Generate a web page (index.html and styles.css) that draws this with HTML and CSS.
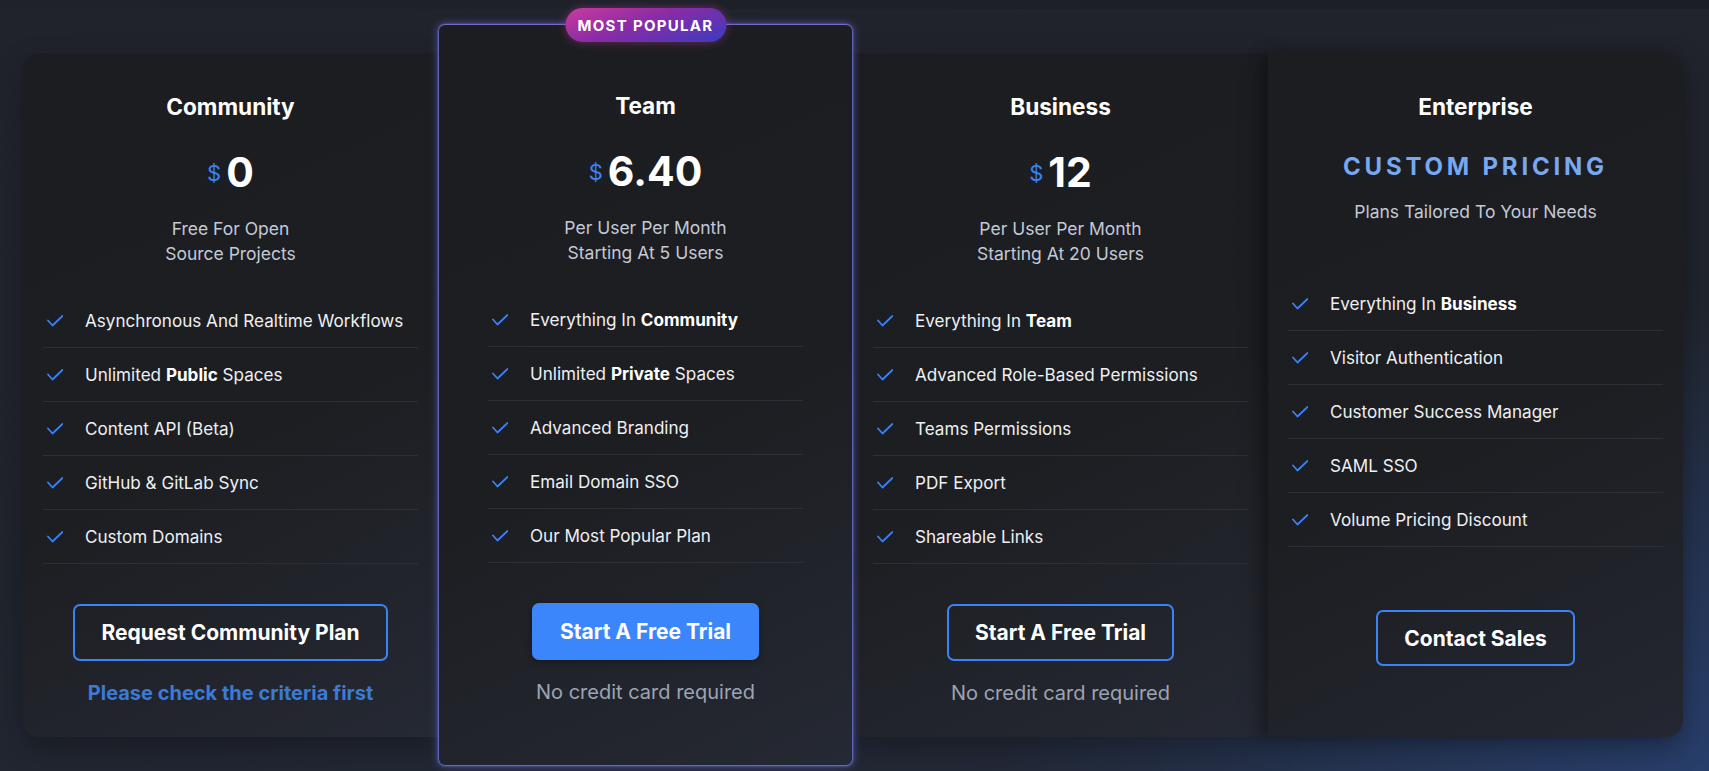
FILE: index.html
```html
<!DOCTYPE html>
<html lang="en">
<head>
<meta charset="utf-8">
<title>Pricing</title>
<link rel="stylesheet" href="styles.css">
</head>
<body>
<div class="top-strip"></div>
<main class="plans">
  <section class="card card-community">
    <h3 class="plan-name">Community</h3>
    <div class="price"><span class="currency">$</span><span class="amount">0</span></div>
    <p class="plan-desc">Free For Open<br>Source Projects</p>
    <ul class="features">
      <li><svg class="check" viewBox="0 0 16 12"><path d="M1 5.5 L5.5 10.5 L15.5 1"/></svg><span>Asynchronous And Realtime Workflows</span></li>
      <li><svg class="check" viewBox="0 0 16 12"><path d="M1 5.5 L5.5 10.5 L15.5 1"/></svg><span>Unlimited <b>Public</b> Spaces</span></li>
      <li><svg class="check" viewBox="0 0 16 12"><path d="M1 5.5 L5.5 10.5 L15.5 1"/></svg><span>Content API (Beta)</span></li>
      <li><svg class="check" viewBox="0 0 16 12"><path d="M1 5.5 L5.5 10.5 L15.5 1"/></svg><span>GitHub &amp; GitLab Sync</span></li>
      <li><svg class="check" viewBox="0 0 16 12"><path d="M1 5.5 L5.5 10.5 L15.5 1"/></svg><span>Custom Domains</span></li>
    </ul>
    <div class="card-foot">
      <a class="btn btn-outline btn-wide" href="#">Request Community Plan</a>
      <p class="foot-note foot-link">Please check the criteria first</p>
    </div>
  </section>

  <section class="card card-team">
    <span class="badge">MOST POPULAR</span>
    <h3 class="plan-name">Team</h3>
    <div class="price"><span class="currency">$</span><span class="amount">6.40</span></div>
    <p class="plan-desc">Per User Per Month<br>Starting At 5 Users</p>
    <ul class="features">
      <li><svg class="check" viewBox="0 0 16 12"><path d="M1 5.5 L5.5 10.5 L15.5 1"/></svg><span>Everything In <b>Community</b></span></li>
      <li><svg class="check" viewBox="0 0 16 12"><path d="M1 5.5 L5.5 10.5 L15.5 1"/></svg><span>Unlimited <b>Private</b> Spaces</span></li>
      <li><svg class="check" viewBox="0 0 16 12"><path d="M1 5.5 L5.5 10.5 L15.5 1"/></svg><span>Advanced Branding</span></li>
      <li><svg class="check" viewBox="0 0 16 12"><path d="M1 5.5 L5.5 10.5 L15.5 1"/></svg><span>Email Domain SSO</span></li>
      <li><svg class="check" viewBox="0 0 16 12"><path d="M1 5.5 L5.5 10.5 L15.5 1"/></svg><span>Our Most Popular Plan</span></li>
    </ul>
    <div class="card-foot">
      <a class="btn btn-primary" href="#">Start A Free Trial</a>
      <p class="foot-note">No credit card required</p>
    </div>
  </section>

  <section class="card card-business">
    <h3 class="plan-name">Business</h3>
    <div class="price"><span class="currency">$</span><span class="amount">12</span></div>
    <p class="plan-desc">Per User Per Month<br>Starting At 20 Users</p>
    <ul class="features">
      <li><svg class="check" viewBox="0 0 16 12"><path d="M1 5.5 L5.5 10.5 L15.5 1"/></svg><span>Everything In <b>Team</b></span></li>
      <li><svg class="check" viewBox="0 0 16 12"><path d="M1 5.5 L5.5 10.5 L15.5 1"/></svg><span>Advanced Role-Based Permissions</span></li>
      <li><svg class="check" viewBox="0 0 16 12"><path d="M1 5.5 L5.5 10.5 L15.5 1"/></svg><span>Teams Permissions</span></li>
      <li><svg class="check" viewBox="0 0 16 12"><path d="M1 5.5 L5.5 10.5 L15.5 1"/></svg><span>PDF Export</span></li>
      <li><svg class="check" viewBox="0 0 16 12"><path d="M1 5.5 L5.5 10.5 L15.5 1"/></svg><span>Shareable Links</span></li>
    </ul>
    <div class="card-foot">
      <a class="btn btn-outline" href="#">Start A Free Trial</a>
      <p class="foot-note">No credit card required</p>
    </div>
  </section>

  <section class="card card-enterprise">
    <h3 class="plan-name">Enterprise</h3>
    <div class="custom-price">CUSTOM PRICING</div>
    <p class="plan-desc plan-desc-single">Plans Tailored To Your Needs</p>
    <ul class="features">
      <li><svg class="check" viewBox="0 0 16 12"><path d="M1 5.5 L5.5 10.5 L15.5 1"/></svg><span>Everything In <b>Business</b></span></li>
      <li><svg class="check" viewBox="0 0 16 12"><path d="M1 5.5 L5.5 10.5 L15.5 1"/></svg><span>Visitor Authentication</span></li>
      <li><svg class="check" viewBox="0 0 16 12"><path d="M1 5.5 L5.5 10.5 L15.5 1"/></svg><span>Customer Success Manager</span></li>
      <li><svg class="check" viewBox="0 0 16 12"><path d="M1 5.5 L5.5 10.5 L15.5 1"/></svg><span>SAML SSO</span></li>
      <li><svg class="check" viewBox="0 0 16 12"><path d="M1 5.5 L5.5 10.5 L15.5 1"/></svg><span>Volume Pricing Discount</span></li>
    </ul>
    <div class="card-foot">
      <a class="btn btn-outline" href="#">Contact Sales</a>
    </div>
  </section>
</main>
</body>
</html>
```

FILE: styles.css
```css
html, body {
  margin: 0;
  padding: 0;
}

body {
  width: 1709px;
  height: 771px;
  overflow: hidden;
  font-family: Inter, "Noto Sans", "Liberation Sans", sans-serif;
  color: #e8eaee;
  background:
    radial-gradient(ellipse 1000px 650px at 100% 100%, rgba(40, 64, 110, 0.95), rgba(40, 64, 110, 0) 72%),
    linear-gradient(170deg, #20232b 0%, #20242c 55%, #232a3a 100%);
  position: relative;
}

.top-strip {
  height: 9px;
  background: linear-gradient(90deg, rgba(28, 31, 38, 0.3), rgba(26, 29, 36, 0.8));
}

.plans {
  display: grid;
  grid-template-columns: repeat(4, 415px);
  align-items: center;
  margin-left: 23px;
  padding-top: 15px;
}

.card {
  position: relative;
  box-sizing: border-box;
  height: 684px;
  display: flex;
  flex-direction: column;
  padding-top: 39px;
  background: linear-gradient(155deg, #1c1d21 0%, #1d1e22 55%, #252933 100%);
  box-shadow: 0 12px 30px rgba(0, 0, 0, 0.28);
}

.card-community {
  border-radius: 16px 0 0 16px;
}

.card-team {
  z-index: 3;
  height: 742px;
  padding-top: 66px;
  border: 1px solid #5d62b4;
  border-top-color: #7669c8;
  border-bottom-color: #5073b8;
  border-radius: 7px;
  box-shadow: 0 0 9px rgba(105, 110, 235, 0.6), 0 0 2px rgba(140, 130, 240, 0.7);
}

.card-business {
  z-index: 1;
}

.card-enterprise {
  z-index: 2;
  border-radius: 0 16px 16px 0;
  background: linear-gradient(155deg, #1c1d21 0%, #1d1e22 55%, #242731 100%);
  box-shadow: -6px 0 14px rgba(0, 0, 0, 0.25), 0 12px 30px rgba(0, 0, 0, 0.28);
}

.badge {
  position: absolute;
  top: -17px;
  left: 50%;
  transform: translateX(-50%);
  box-sizing: border-box;
  width: 161px;
  height: 34px;
  border-radius: 17px;
  display: flex;
  align-items: center;
  justify-content: center;
  font-size: 15px;
  font-weight: 700;
  letter-spacing: 1.3px;
  color: #ffffff;
  background: linear-gradient(160deg, #c93b9d 0%, #8a2ba5 45%, #3c3bbf 100%);
  box-shadow: 0 0 10px rgba(200, 60, 170, 0.45);
}

.plan-name {
  margin: 0;
  font-size: 22.6px;
  line-height: 30px;
  font-weight: 700;
  text-align: center;
  color: #ffffff;
}

.price {
  margin-top: 25px;
  height: 50px;
  display: flex;
  justify-content: center;
  align-items: center;
  gap: 5px;
}

.currency {
  font-size: 22px;
  line-height: 22px;
  color: #3b82f6;
  margin-top: 2px;
}

.amount {
  font-size: 41px;
  line-height: 50px;
  font-weight: 700;
  color: #ffffff;
}

.plan-desc {
  margin: 19px 0 0;
  font-size: 17.5px;
  line-height: 25px;
  text-align: center;
  color: #c3c9d6;
}

.custom-price {
  margin-top: 30px;
  font-size: 24px;
  line-height: 30px;
  font-weight: 700;
  letter-spacing: 3.8px;
  text-align: center;
  color: #78a8f0;
}

.plan-desc-single {
  margin-top: 17px;
}

.features {
  list-style: none;
  margin: 28px 20px 0;
  padding: 0;
}

.card-team .features {
  margin: 28px 49px 0;
}

.card-enterprise .features {
  margin-top: 53px;
}

.features li {
  box-sizing: border-box;
  height: 54px;
  display: flex;
  align-items: center;
  gap: 22px;
  padding-left: 4px;
  border-bottom: 1px solid #2c2f36;
  font-size: 17.1px;
  color: #eef0f3;
}

.features b {
  font-weight: 700;
  color: #ffffff;
}

.check {
  flex: none;
  width: 16px;
  height: 12px;
}

.check path {
  fill: none;
  stroke: #3b82f6;
  stroke-width: 1.8;
  stroke-linecap: round;
  stroke-linejoin: round;
}

.card-foot {
  margin-top: 40px;
  display: flex;
  flex-direction: column;
  align-items: center;
}

.card-enterprise .card-foot {
  margin-top: 63px;
}

.btn {
  box-sizing: border-box;
  display: inline-flex;
  align-items: center;
  justify-content: center;
  height: 57px;
  padding: 0 26px;
  border: 2px solid #3b82f6;
  border-radius: 7px;
  font-size: 21px;
  font-weight: 700;
  color: #ffffff;
  text-decoration: none;
}

.btn-outline {
  background: transparent;
}

.btn-primary {
  background: #3b86fb;
  border-color: #3b86fb;
  box-shadow: 0 2px 6px rgba(0, 0, 0, 0.3);
}

.card-enterprise .btn {
  height: 56px;
}

.foot-note {
  margin: 20px 0 0;
  font-size: 20px;
  line-height: 25px;
  color: #9ca4b3;
}

.foot-link {
  font-weight: 700;
  color: #3a7bd8;
}
```
